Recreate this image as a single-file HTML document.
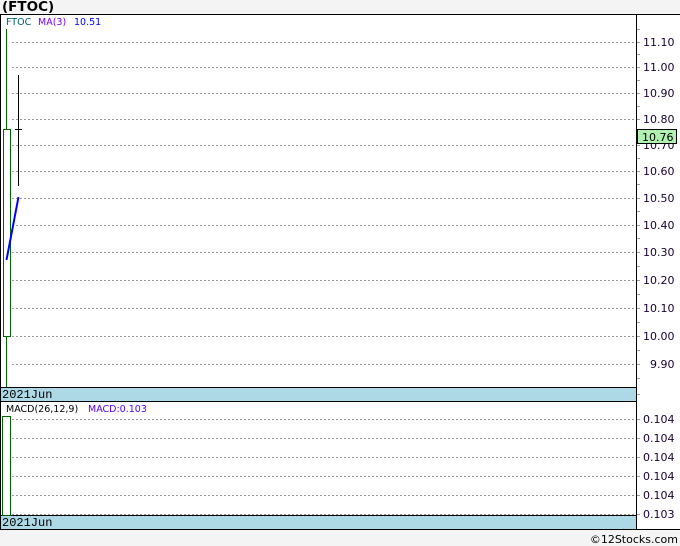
<!DOCTYPE html>
<html><head><style>
body{margin:0;background:#f4f4f4;width:680px;height:546px;overflow:hidden;font-family:"DejaVu Sans",Verdana,sans-serif}
</style></head><body>
<svg width="680" height="546" xmlns="http://www.w3.org/2000/svg" style="position:absolute;left:0;top:0">
<text x="2" y="11" font-family="DejaVu Sans,Verdana,sans-serif" font-weight="bold" font-size="13.5" fill="#000">(FTOC)</text>
<rect x="0.5" y="14.5" width="690" height="515" fill="#fff" stroke="#000"/>
<g stroke="#999" stroke-dasharray="2,2" stroke-width="1">
<path d="M12 42.5H636M12 67.5H636M12 93.5H636M12 119.5H636M12 145.5H636M12 171.5H636M12 198.5H636M12 225.5H636M12 252.5H636M12 280.5H636M12 308.5H636M12 336.5H636M12 364.5H636"/>
<path d="M12 419.5H636M12 438.5H636M12 457.5H636M12 476.5H636M12 495.5H636M12 514.5H636"/>
</g>
<g stroke="#999"><path d="M636 29.5h4M636 42.5h4M636 54.5h4M636 67.5h4M636 80.5h4M636 93.5h4M636 106.5h4M636 119.5h4M636 132.5h4M636 145.5h4M636 158.5h4M636 171.5h4M636 184.5h4M636 198.5h4M636 211.5h4M636 225.5h4M636 238.5h4M636 252.5h4M636 266.5h4M636 280.5h4M636 294.5h4M636 308.5h4M636 322.5h4M636 336.5h4M636 350.5h4M636 364.5h4M636 378.5h4M636 394.5h4M636 419.5h4M636 438.5h4M636 457.5h4M636 476.5h4M636 495.5h4M636 514.5h4"/></g>
<line x1="636.5" y1="14" x2="636.5" y2="530" stroke="#000"/>
<rect x="0.5" y="387.5" width="636" height="14" fill="#add8e6" stroke="#000"/>
<rect x="0.5" y="515.5" width="636" height="14" fill="#add8e6" stroke="#000"/>
<g font-family="Liberation Mono,monospace" font-size="12" fill="#000">
<text x="2" y="398">2021Jun</text>
<text x="2" y="526">2021Jun</text>
</g>
<g font-family="DejaVu Sans,Verdana,sans-serif" font-size="11" fill="#1a0033">
<text x="643" y="46">11.10</text><text x="643" y="71">11.00</text><text x="643" y="97">10.90</text><text x="643" y="123">10.80</text><text x="643" y="149">10.70</text><text x="643" y="175">10.60</text><text x="643" y="202">10.50</text><text x="643" y="229">10.40</text><text x="643" y="256">10.30</text><text x="643" y="284">10.20</text><text x="643" y="312">10.10</text><text x="643" y="340">10.00</text><text x="650" y="368">9.90</text>
<text x="643" y="423">0.104</text><text x="643" y="442">0.104</text><text x="643" y="461">0.104</text><text x="643" y="480">0.104</text><text x="643" y="499">0.104</text><text x="643" y="518">0.103</text>
</g>
<rect x="637.5" y="129.5" width="39" height="14" fill="#b0f0b0" stroke="#000"/>
<text x="642" y="141" font-family="DejaVu Sans,Verdana,sans-serif" font-size="11" fill="#000">10.76</text>
<line x1="6.5" y1="29" x2="6.5" y2="387" stroke="#006400"/>
<rect x="3.5" y="129.5" width="7" height="207" fill="#fff" stroke="#006400"/>
<line x1="18.5" y1="75" x2="18.5" y2="186" stroke="#000"/>
<line x1="15" y1="129.5" x2="22" y2="129.5" stroke="#000"/>
<line x1="6.5" y1="260" x2="18.5" y2="197" stroke="#0000ff" stroke-width="2"/>
<rect x="2.5" y="416.5" width="8" height="99" fill="#fff" stroke="#006400"/>
<text x="6" y="25" font-family="DejaVu Sans,Verdana,sans-serif" font-size="9.5" fill="#006060">FTOC</text>
<text x="38" y="25" font-family="DejaVu Sans,Verdana,sans-serif" font-size="9.5" fill="#7700ff">MA(3)</text>
<text x="74" y="25" font-family="DejaVu Sans,Verdana,sans-serif" font-size="9.5" fill="#0000ff">10.51</text>
<text x="6" y="412" font-family="DejaVu Sans,Verdana,sans-serif" font-size="9.5" fill="#000">MACD(26,12,9)</text>
<text x="88" y="412" font-family="DejaVu Sans,Verdana,sans-serif" font-size="9.5" fill="#5500ff">MACD:0.103</text>
<text x="678" y="543" text-anchor="end" font-family="DejaVu Sans,Verdana,sans-serif" font-size="11" fill="#000">©12Stocks.com</text>
</svg>
</body></html>
